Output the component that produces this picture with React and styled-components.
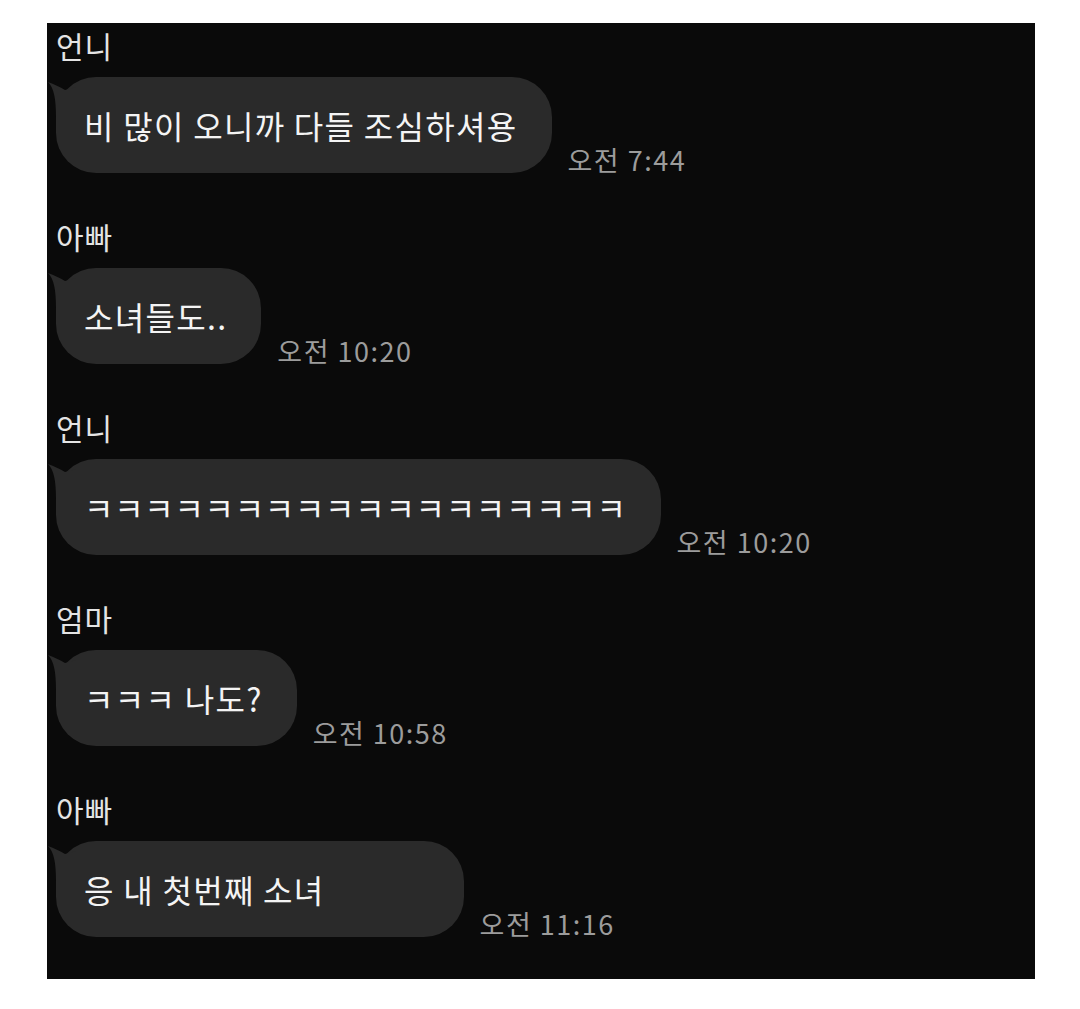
import styled, { createGlobalStyle } from "styled-components";

const Global = createGlobalStyle`
  body {
    margin: 0;
    background: #ffffff;
  }
`;

const messages = [
  { name: "언니", text: "비 많이 오니까 다들 조심하셔용", time: "오전 7:44" },
  { name: "아빠", text: "소녀들도..", time: "오전 10:20" },
  { name: "언니", text: "ㅋㅋㅋㅋㅋㅋㅋㅋㅋㅋㅋㅋㅋㅋㅋㅋㅋㅋ", time: "오전 10:20", spacing: 0.7 },
  { name: "엄마", text: "ㅋㅋㅋ 나도?", time: "오전 10:58" },
  { name: "아빠", text: "응 내 첫번째 소녀", time: "오전 11:16", trail: 105 },
];

const Page = styled.div`
  padding: 23px 45px 31px 47px;
  font-family: "Noto Sans CJK KR", "Noto Sans", sans-serif;
`;

const Panel = styled.div`
  background: #0a0a0a;
  height: 956px;
  box-sizing: border-box;
  padding: 5px 9px 0 9px;
  display: flex;
  flex-direction: column;
  gap: 46px;
`;

const Group = styled.div`
  display: flex;
  flex-direction: column;
`;

const Name = styled.div`
  color: #e4e4e4;
  font-size: 30px;
  letter-spacing: 1px;
  line-height: 34px;
  height: 34px;
  margin-bottom: 15px;
`;

const Row = styled.div`
  display: flex;
  align-items: flex-end;
  gap: 16px;
`;

const Bubble = styled.div`
  position: relative;
  background: #2a2a2a;
  color: #f4f4f4;
  height: 96px;
  border-radius: 40px;
  padding: 0 ${(p) => 34 + (p.$trail || 0)}px 0 28px;
  display: flex;
  align-items: center;
  font-size: 32px;
  letter-spacing: ${(p) => p.$spacing ?? 1.3}px;
  white-space: nowrap;
`;

const Tail = styled.svg`
  position: absolute;
  left: -8px;
  top: 0;
  width: 30px;
  height: 42px;
`;

const Time = styled.div`
  color: #9c9c9c;
  font-size: 27px;
  letter-spacing: 1.5px;
  line-height: 26px;
  margin-bottom: 0;
  white-space: nowrap;
`;

export default function App() {
  return (
    <Page>
      <Global />
      <Panel>
        {messages.map((m, i) => (
          <Group key={i}>
            <Name>{m.name}</Name>
            <Row>
              <Bubble $spacing={m.spacing} $trail={m.trail}>
                <Tail viewBox="0 0 30 42">
                  <path
                    d="M17 13 C12 10 6 7 0 5 C6 11 8 22 8 40 L28 40 L28 10 Z"
                    fill="#2a2a2a"
                  />
                </Tail>
                {m.text}
              </Bubble>
              <Time>{m.time}</Time>
            </Row>
          </Group>
        ))}
      </Panel>
    </Page>
  );
}
